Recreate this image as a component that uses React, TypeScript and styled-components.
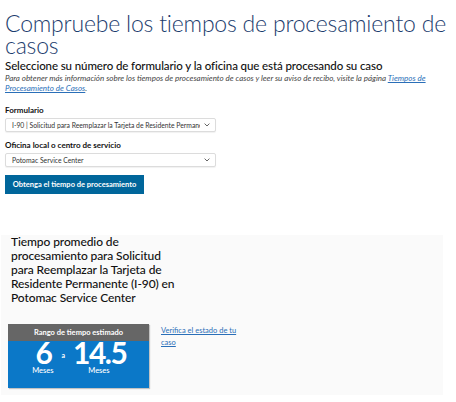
import React from "react";
import styled, { createGlobalStyle } from "styled-components";

const GlobalStyle = createGlobalStyle`
  html, body {
    margin: 0;
    padding: 0;
    background: #fff;
  }
  body {
    font-family: Lato, "Open Sans", sans-serif;
    color: #000;
  }
`;

const Page = styled.div`
  width: 456px;
  height: 402px;
  overflow: hidden;
`;

const Form = styled.section`
  padding: 12px 5px 0;
`;

const Title = styled.h1`
  margin: 0;
  font-size: 23px;
  line-height: 22px;
  font-weight: 300;
  letter-spacing: -0.2px;
  color: #1c3d6e;
`;

const Subtitle = styled.h2`
  margin: 3px 0 0;
  font-size: 11.5px;
  line-height: 13px;
  font-weight: 500;
  letter-spacing: -0.1px;
  color: #111;
`;

const Intro = styled.p`
  margin: 2px 0 0;
  font-size: 8px;
  line-height: 9.6px;
  font-style: italic;
  color: #444;
`;

const Link = styled.a`
  color: #2a6fb8;
  text-decoration: underline;
`;

const Label = styled.div<{ $gap: number }>`
  margin-top: ${(p) => p.$gap}px;
  font-size: 8px;
  line-height: 10px;
  font-weight: 700;
  color: #111;
`;

const SelectBox = styled.div`
  margin-top: 2.5px;
  width: 211px;
  height: 14px;
  box-sizing: border-box;
  border: 1px solid #dcdcdc;
  border-radius: 2px;
  box-shadow: 0 1px 1px rgba(0, 0, 0, 0.06);
  display: flex;
  align-items: center;
  padding: 0 5px 0 6px;
  background: #fff;
`;

const SelectText = styled.span`
  flex: 1;
  font-size: 6.8px;
  color: #333;
  white-space: nowrap;
  overflow: hidden;
`;

const Chevron = () => (
  <svg width="6" height="4" viewBox="0 0 6 4" style={{ marginLeft: 4 }}>
    <path d="M0.6 0.6 L3 3 L5.4 0.6" fill="none" stroke="#555" strokeWidth="0.9" />
  </svg>
);

const Button = styled.button`
  margin-top: 8.7px;
  width: 139px;
  height: 19px;
  border: none;
  border-radius: 0;
  background: #00669b;
  color: #fff;
  font-family: inherit;
  font-size: 7.5px;
  font-weight: 700;
  padding: 0;
  cursor: pointer;
  display: block;
`;

const Panel = styled.section`
  margin: 40.6px 13px 0 1px;
  height: 160px;
  box-sizing: border-box;
  background: #fafafa;
  padding: 0 0 0 7px;
`;

const PanelHeading = styled.h3`
  margin: 0;
  padding-left: 3px;
  width: 166px;
  font-size: 12px;
  line-height: 14px;
  font-weight: 500;
  letter-spacing: -0.1px;
  color: #111;
`;

const ResultRow = styled.div`
  margin-top: 19px;
  display: flex;
  align-items: flex-start;
  gap: 12px;
`;

const Estimate = styled.div`
  width: 141px;
  box-shadow: 1px 1px 1px rgba(0, 0, 0, 0.22);
`;

const EstimateHeader = styled.div`
  height: 17px;
  background: #666;
  color: #fff;
  font-size: 7.5px;
  font-weight: 700;
  line-height: 17px;
  text-align: center;
`;

const EstimateBody = styled.div`
  height: 47px;
  background: #0b78c8;
  color: #fff;
  display: flex;
  justify-content: center;
  align-items: flex-start;
  gap: 8px;
`;

const Figure = styled.div`
  display: flex;
  flex-direction: column;
  align-items: center;
`;

const Number = styled.span`
  margin: -1px -1.5px 0 0;
  font-size: 30px;
  line-height: 24px;
  font-weight: 700;
  letter-spacing: -1.5px;
`;

const Unit = styled.span`
  margin-top: 2px;
  font-size: 7.5px;
  line-height: 9px;
  font-weight: 500;
`;

const Between = styled.span`
  font-size: 7px;
  font-weight: 700;
  margin-top: 10px;
`;

const StatusLink = styled(Link)`
  width: 80px;
  margin-top: 1px;
  font-size: 7.5px;
  line-height: 12px;
`;

export default function App() {
  return (
    <Page>
      <GlobalStyle />
      <Form>
        <Title>Compruebe los tiempos de procesamiento de casos</Title>
        <Subtitle>
          Seleccione su número de formulario y la oficina que está procesando su caso
        </Subtitle>
        <Intro>
          Para obtener más información sobre los tiempos de procesamiento de casos y leer su
          aviso de recibo, visite la página <Link href="#">Tiempos de Procesamiento de Casos</Link>.
        </Intro>
        <Label $gap={12}>Formulario</Label>
        <SelectBox>
          <SelectText>
            I-90 | Solicitud para Reemplazar la Tarjeta de Residente Permanente
          </SelectText>
          <Chevron />
        </SelectBox>
        <Label $gap={8.5}>Oficina local o centro de servicio</Label>
        <SelectBox>
          <SelectText>Potomac Service Center</SelectText>
          <Chevron />
        </SelectBox>
        <Button>Obtenga el tiempo de procesamiento</Button>
      </Form>
      <Panel>
        <PanelHeading>
          Tiempo promedio de procesamiento para Solicitud para Reemplazar la Tarjeta de
          Residente Permanente (I-90) en Potomac Service Center
        </PanelHeading>
        <ResultRow>
          <Estimate>
            <EstimateHeader>Rango de tiempo estimado</EstimateHeader>
            <EstimateBody>
              <Figure>
                <Number>6</Number>
                <Unit>Meses</Unit>
              </Figure>
              <Between>a</Between>
              <Figure>
                <Number>14.5</Number>
                <Unit>Meses</Unit>
              </Figure>
            </EstimateBody>
          </Estimate>
          <StatusLink href="#">Verifica el estado de tu caso</StatusLink>
        </ResultRow>
      </Panel>
    </Page>
  );
}
